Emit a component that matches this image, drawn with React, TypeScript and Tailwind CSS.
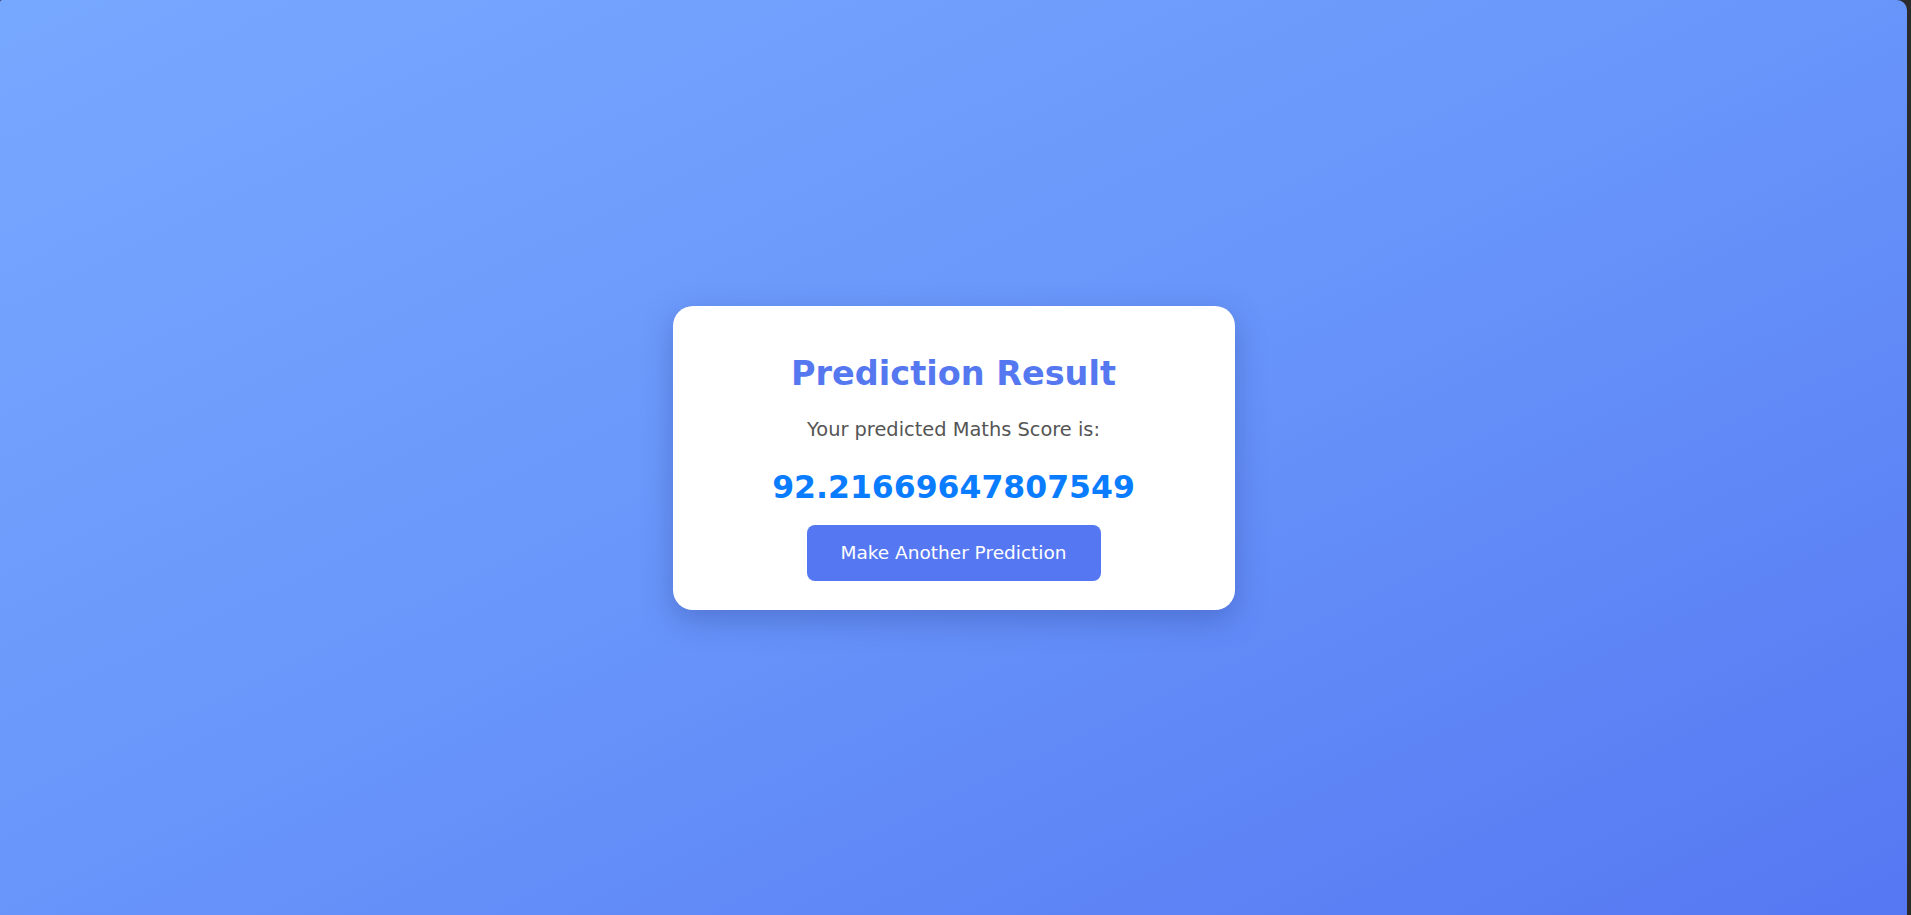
import React from "react";

const font = { fontFamily: '"DejaVu Sans", "Open Sans", sans-serif' };

const App = () => {
  return (
    <div className="flex h-[915px] w-full bg-[#2b2b2b]" style={font}>
      <div className="flex flex-1 items-center justify-center rounded-tr-[10px] rounded-tl-[2px] bg-gradient-to-br from-[#77a8ff] via-[#6895fa] to-[#5677f2] mr-[4px]">
        <div className="flex w-[562px] flex-col items-center rounded-[20px] bg-white pt-[47px] pb-[29px] shadow-[0_10px_30px_rgba(40,60,140,0.35)]">
          <h1 className="text-[33.5px] leading-[41px] font-bold text-[#5578f0]">Prediction Result</h1>
          <p className="mt-[23px] text-[19.4px] leading-[26px] text-[#555555]">Your predicted Maths Score is:</p>
          <div className="mt-[25px] text-[31.5px] leading-[38px] font-bold text-[#0a7cff]">92.21669647807549</div>
          <button className="mt-[19px] h-[56px] w-[294px] rounded-[8px] bg-[#5578f2] text-[18.5px] text-white">
            Make Another Prediction
          </button>
        </div>
      </div>
    </div>
  );
};

export default App;
